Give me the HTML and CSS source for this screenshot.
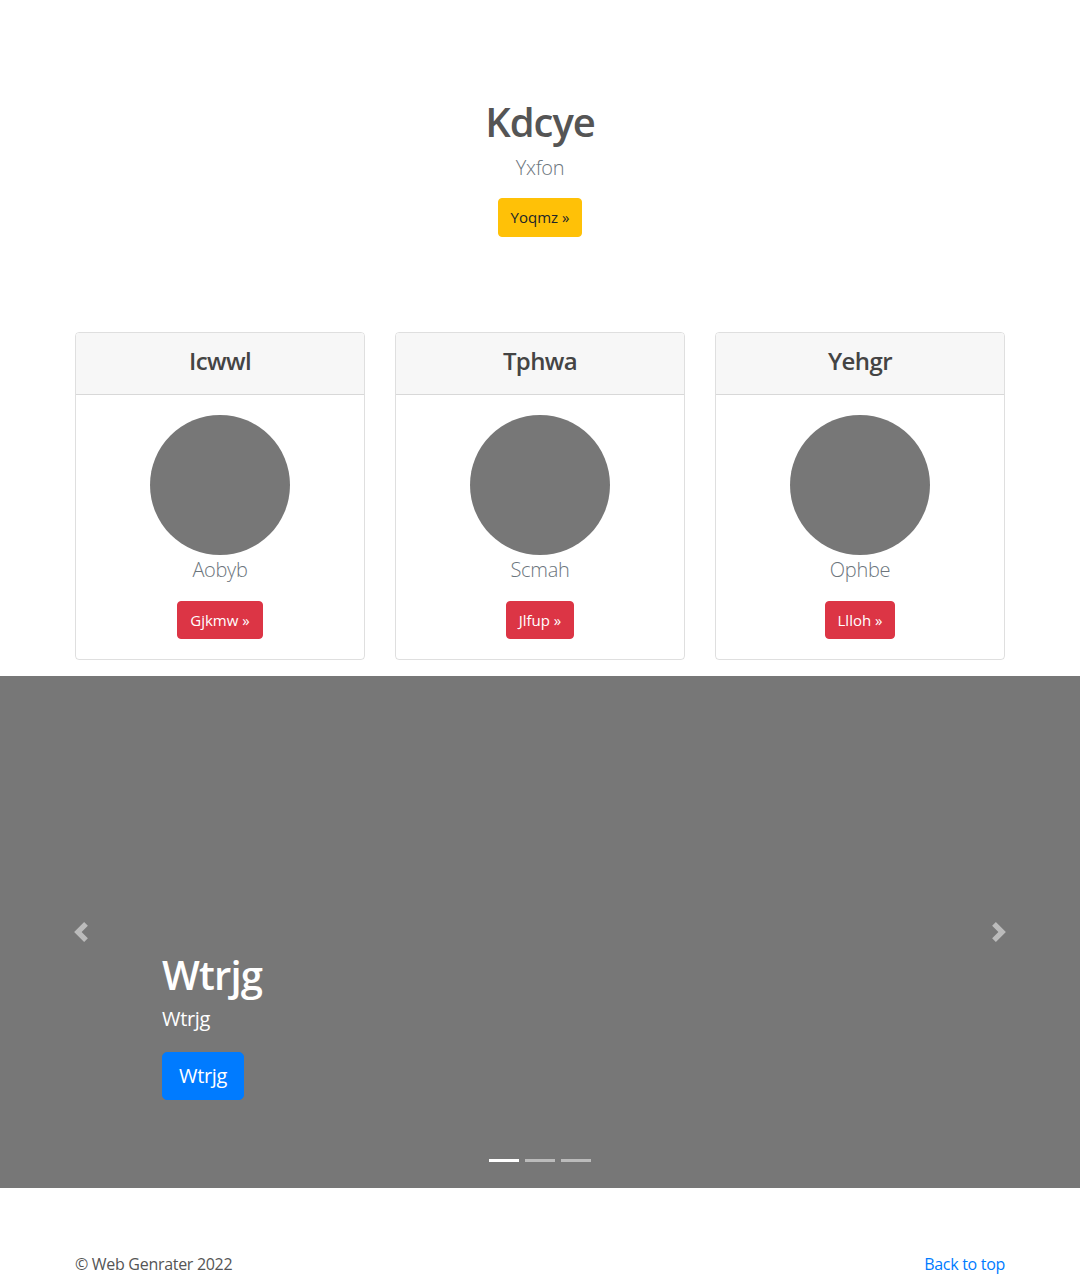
FILE: index.html
```html
<!DOCTYPE html>
<html lang="en">
<head>
<meta charset="utf-8">
<title>Kdcye</title>
<link rel="stylesheet" href="styles.css">
</head>
<body>
<main>
  <section class="hero">
    <h1 class="hero-title">Kdcye</h1>
    <p class="lead muted">Yxfon</p>
    <a class="btn btn-warning" href="#">Yoqmz &raquo;</a>
  </section>

  <section class="container cards">
    <div class="card">
      <div class="card-header"><h3 class="card-title">Icwwl</h3></div>
      <div class="card-body">
        <div class="avatar"></div>
        <p class="lead muted card-text">Aobyb</p>
        <a class="btn btn-danger" href="#">Gjkmw &raquo;</a>
      </div>
    </div>
    <div class="card">
      <div class="card-header"><h3 class="card-title">Tphwa</h3></div>
      <div class="card-body">
        <div class="avatar"></div>
        <p class="lead muted card-text">Scmah</p>
        <a class="btn btn-danger" href="#">Jlfup &raquo;</a>
      </div>
    </div>
    <div class="card">
      <div class="card-header"><h3 class="card-title">Yehgr</h3></div>
      <div class="card-body">
        <div class="avatar"></div>
        <p class="lead muted card-text">Ophbe</p>
        <a class="btn btn-danger" href="#">Llloh &raquo;</a>
      </div>
    </div>
  </section>

  <section class="carousel">
    <ol class="indicators">
      <li class="active"></li>
      <li></li>
      <li></li>
    </ol>
    <div class="caption">
      <h1 class="caption-title">Wtrjg</h1>
      <p class="caption-text">Wtrjg</p>
      <div class="caption-action"><a class="btn btn-lg btn-primary" href="#">Wtrjg</a></div>
    </div>
    <a class="control control-prev" href="#" aria-label="Previous">
      <svg width="20" height="20" viewBox="0 0 8 8" fill="#fff"><path d="M5.25 0l-4 4 4 4 1.5-1.5L4.25 4l2.5-2.5L5.25 0z"/></svg>
    </a>
    <a class="control control-next" href="#" aria-label="Next">
      <svg width="20" height="20" viewBox="0 0 8 8" fill="#fff"><path d="M2.75 0l-1.5 1.5L3.75 4l-2.5 2.5L2.75 8l4-4-4-4z"/></svg>
    </a>
  </section>

  <footer class="container footer">
    <p class="copy">&copy; Web Genrater 2022</p>
    <a class="back" href="#">Back to top</a>
  </footer>
</main>
</body>
</html>
```

FILE: styles.css
```css
* { box-sizing: border-box; }
html, body { margin: 0; padding: 0; }
body {
  font-family: "Segoe UI", "Open Sans", "Noto Sans", "Liberation Sans", sans-serif;
  font-size: 16px;
  line-height: 1.5;
  letter-spacing: -0.3px;
  color: #212529;
  background: #fff;
}
h1, h3, p { margin: 0; }
a { text-decoration: none; }

.container {
  width: 960px;
  margin: 0 auto;
  padding: 0 15px;
}

.hero {
  text-align: center;
  padding: 98px 0 0;
}
.hero-title {
  font-size: 40px;
  font-weight: 600;
  line-height: 1.2;
  letter-spacing: -1px;
  color: #555;
  margin-bottom: 7px;
}
.lead {
  font-size: 20px;
  font-weight: 300;
  line-height: 1.5;
}
.muted { color: #6c757d; }
.hero .lead { margin-bottom: 15px; }

.btn {
  display: inline-block;
  font-size: 15px;
  line-height: 1.5;
  letter-spacing: 0;
  padding: 7px 12px;
  border: 1px solid transparent;
  border-radius: 4px;
}
.btn-warning { background: #ffc107; border-color: #ffc107; color: #212529; }
.btn-danger { background: #dc3545; border-color: #dc3545; color: #fff; }
.btn-primary { background: #007bff; border-color: #007bff; color: #fff; }
.btn-lg { font-size: 20px; padding: 8px 16px; border-radius: 5px; line-height: 1.5; letter-spacing: -0.3px; }

.cards {
  margin-top: 95px;
  display: grid;
  grid-template-columns: repeat(3, 290px);
  column-gap: 30px;
}
.card {
  border: 1px solid rgba(0,0,0,.125);
  border-radius: 4px;
  text-align: center;
  overflow: hidden;
}
.card-header {
  background: #f7f7f7;
  border-bottom: 1px solid rgba(0,0,0,.125);
  padding: 10px 20px 15px;
}
.card-title {
  font-size: 24px;
  font-weight: 600;
  line-height: 1.5;
  letter-spacing: -0.6px;
  color: #444;
}
.card-body {
  padding: 20px;
  display: flex;
  flex-direction: column;
  align-items: center;
}
.avatar {
  width: 140px;
  height: 140px;
  border-radius: 50%;
  background: #777;
}
.card-text { margin-bottom: 16px; }

.carousel {
  position: relative;
  height: 512px;
  background: #777;
  margin-top: 16px;
}
.indicators {
  position: absolute;
  left: 0;
  right: 0;
  bottom: 16px;
  margin: 0;
  padding: 0;
  list-style: none;
  display: flex;
  justify-content: center;
}
.indicators li {
  width: 30px;
  height: 3px;
  margin: 10px 3px;
  background: #fff;
  opacity: .5;
}
.indicators li.active { opacity: 1; }

.caption {
  position: absolute;
  left: 15%;
  right: 15%;
  bottom: 48px;
  padding: 20px 0;
  color: #fff;
  text-align: left;
}
.caption-title {
  font-size: 40px;
  font-weight: 600;
  line-height: 1.2;
  letter-spacing: -0.8px;
  margin-bottom: 5px;
}
.caption-text {
  font-size: 20px;
  line-height: 1.5;
  margin-bottom: 18px;
}
.caption-action { margin-bottom: 20px; display: flex; }

.control {
  position: absolute;
  top: 0;
  bottom: 0;
  width: 15%;
  display: flex;
  align-items: center;
  justify-content: center;
  opacity: .5;
}
.control-prev { left: 0; }
.control-next { right: 0; }

.footer {
  display: flex;
  justify-content: space-between;
  padding-top: 64px;
  padding-bottom: 48px;
}
.copy { color: #555; }
.back { color: #007bff; }
```
